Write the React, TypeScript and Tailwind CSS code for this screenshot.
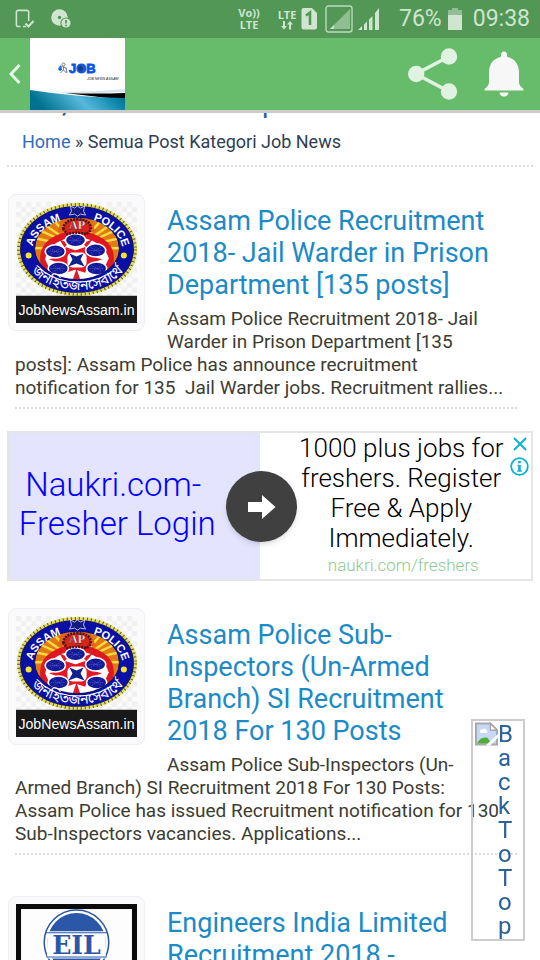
import React from "react";

function StatusBar() {
  return (
    <div className="flex h-[38px] items-center bg-[#529755] pr-[10px] pl-[15px] text-[#cfe5d0]">
      <svg width="20" height="20" viewBox="0 0 20 20" fill="none" stroke="currentColor" strokeWidth="1.6" aria-label="Device connected">
        <path d="M5.5 17.5H3a1.6 1.6 0 0 1-1.600-1.600V3A1.600 1.600 0 0 1 3 1.400h9A1.600 1.600 0 0 1 13.700 3v9M8 17.500h3" />
        <path d="M10.500 14.500l3 3 5-5.500" strokeWidth="2" />
      </svg>
      <svg className="ml-4" width="20" height="20" viewBox="0 0 20 20" aria-label="Disc warning">
        <circle cx="8.500" cy="8.500" r="8.300" fill="currentColor" />
        <circle cx="8.500" cy="8.500" r="1.700" fill="#529755" />
        <circle cx="15" cy="14" r="5.600" fill="#529755" />
        <circle cx="15" cy="14" r="4.600" fill="currentColor" />
        <path d="M15 11v3.500M15 15.700v1.500" stroke="#529755" strokeWidth="1.700" />
      </svg>
      <div className="ml-auto flex items-center">
        <div className="-ml-1 mr-[2px] w-[22px] text-center font-['Open_Sans',sans-serif] text-[11px] leading-[12px] font-bold">
          Vo))
          <br />
          LTE
        </div>
        <div className="ml-[15px] flex w-5 flex-col items-center font-['Open_Sans',sans-serif] text-[11px] leading-[12px] font-bold">
          LTE
          <svg width="12" height="9" viewBox="0 0 12 9" fill="currentColor" aria-hidden="true">
            <path d="M2 0h2v5h2L3 8.500 0 5h2zM8 8.500h2v-5h2L9 0 6 3.500h2z" />
          </svg>
        </div>
        <svg className="ml-1" width="17" height="22" viewBox="0 0 17 22" aria-label="SIM 1">
          <path d="M2.500 0H11l5 5v14.500A2 2 0 0 1 14 21.500H2.500a2 2 0 0 1-2-2V2a2 2 0 0 1 2-2z" fill="currentColor" />
          <path d="M5 7.500L9 4.500v12.500" fill="none" stroke="#529755" strokeWidth="2.600" />
        </svg>
        <svg className="ml-[7px]" width="28" height="28" viewBox="0 0 28 28" aria-label="SIM 2 signal">
          <rect x="1" y="1" width="26" height="26" rx="2.500" fill="none" stroke="currentColor" strokeWidth="1.400" opacity=".85" />
          <path d="M5 24L25 4v20z" fill="currentColor" opacity=".5" />
          <path d="M5 24l4-4v4z" fill="currentColor" />
        </svg>
        <svg className="ml-[5px]" width="22" height="22" viewBox="0 0 22 22" fill="currentColor" aria-label="Signal strength">
          <path d="M0 22l4-4v4zM6 16.500l3-3V22H6zM11 11.500l3.500-3.500v14H11zM17 5l4-5v22h-4z" />
        </svg>
        <span className="ml-[19px] text-[23px] leading-7">76%</span>
        <svg className="ml-[6px]" width="14" height="22" viewBox="0 0 14 22" aria-label="Battery">
          <path d="M0 2h4V0h6v2h4v6H0z" fill="currentColor" opacity=".5" />
          <path d="M0 7h14v15H0z" fill="currentColor" />
        </svg>
        <span className="ml-[11px] text-[23px] leading-7">09:38</span>
      </div>
    </div>
  );
}

function SiteLogo() {
  return (
    <svg width="95" height="72" viewBox="0 0 95 72" role="img" aria-label="Job News Assam">
      <defs>
        <linearGradient id="wave" x1="0" x2="1" y1="0.2" y2="0">
          <stop offset="0" stopColor="#00728f" />
          <stop offset=".45" stopColor="#58b8dc" />
          <stop offset=".8" stopColor="#0b86aa" />
          <stop offset="1" stopColor="#006480" />
        </linearGradient>
      </defs>
      <rect width="95" height="72" fill="#fff" />
      <path d="M0 52Q45 56 95 51v3Q60 56 40 55z" fill="#d5e6ee" />
      <path d="M35 55q30 1 60 0v7z" fill="#000" />
      <path d="M0 52Q45 59 95 60v12H0z" fill="url(#wave)" />
      <path d="M31 27q-5 4-1 6l2-1z" fill="#0b62d6" />
      <g fill="none" stroke="#6c7f92" strokeWidth="1">
        <circle cx="33.500" cy="26.500" r="1.500" />
        <path d="M29 30l4-1.500 4 2M33.500 29v3l-3 3M33.500 32l3 3M36 30l1 5" />
      </g>
      <text x="39" y="35" fontFamily="Liberation Sans" fontWeight="700" fontSize="13" fill="#0757df" stroke="#0757df" strokeWidth=".8">JOB</text>
      <circle cx="51" cy="30.500" r="2.800" fill="#123e87" />
      <text x="57" y="42" fontFamily="Liberation Sans" fontStyle="italic" fontSize="3.500" fill="#222">JOB NEWS ASSAM</text>
    </svg>
  );
}

function Toolbar() {
  return (
    <div className="flex h-[72px] items-center bg-[#66bc6b]">
      <button type="button" aria-label="Back" className="flex h-full w-[30px] items-center justify-center">
        <svg width="12" height="20" viewBox="0 0 12 20" fill="none" stroke="#e6f5e7" strokeWidth="3">
          <path d="M10.500 1L2 10l8.500 9" />
        </svg>
      </button>
      <SiteLogo />
      <button type="button" aria-label="Share" className="ml-auto">
        <svg width="50" height="52" viewBox="0 0 50 52" fill="#e0f2e1">
          <path d="M41 8.500L8 26l33 17.500" fill="none" stroke="#e0f2e1" strokeWidth="3.600" />
          <circle cx="41" cy="8.500" r="8.200" />
          <circle cx="8.200" cy="26" r="8.200" />
          <circle cx="41" cy="43.500" r="8.200" />
        </svg>
      </button>
      <button type="button" aria-label="Notifications" className="mr-4 ml-[26px]">
        <svg width="40" height="46" viewBox="0 0 40 46" fill="#f7f7f7">
          <path d="M17 4a3 3.500 0 0 1 6 0v1.800C31 8 35 13.500 35 21v10c0 3 1.500 4.500 4.500 7v1.500H.5V38C3.500 35.500 5 34 5 31V21C5 13.500 9 8 17 5.800z" />
          <path d="M15.500 41.500h9a4.500 4 0 0 1-9 0z" />
        </svg>
      </button>
    </div>
  );
}

function PoliceEmblem() {
  const wheels = [
    [59, 38],
    [39, 49],
    [79, 48],
    [42, 66],
    [80, 66],
  ];
  return (
    <svg width="121" height="121" viewBox="0 0 120 120" role="img" aria-label="Assam Police emblem, JobNewsAssam.in">
      <defs>
        <pattern id="check" width="10" height="10" patternUnits="userSpaceOnUse">
          <rect width="10" height="10" fill="#fbfbfb" />
          <path d="M0 0h5v5H0zM5 5h5v5H5z" fill="#f0f0f0" />
        </pattern>
        <clipPath id="field">
          <ellipse cx="60.500" cy="46" rx="42" ry="31" />
        </clipPath>
        <path id="topArc" d="M16 50A45 34 0 0 1 106 50" />
        <path id="bottomArc" d="M9 56A53 39 0 0 0 113 56" />
      </defs>
      <rect width="120" height="120" fill="url(#check)" />
      <ellipse cx="60.500" cy="47" rx="58" ry="44.500" fill="#1b1b52" stroke="#e4df62" strokeWidth="3" />
      <ellipse cx="60.500" cy="47" rx="58" ry="44.500" fill="none" stroke="#5b5a2c" strokeWidth="3" strokeDasharray="1 3" />
      <ellipse cx="60.500" cy="47" rx="55.500" ry="42.500" fill="#0a0fa5" />
      <g clipPath="url(#field)">
        <rect x="15" y="12" width="92" height="70" fill="#e07a14" />
        <path
          d="M61 45L10 10M61 45L10 22M61 45L10 34M61 45L10 46M61 45L26 5M61 45L42 5M61 45L80 5M61 45L96 5M61 45L112 10M61 45L112 22M61 45L112 34M61 45L112 46"
          stroke="#ffdc3c"
          strokeWidth="2.400"
        />
        <path d="M47 12h26l6 18H41z" fill="#e2641a" />
        <path d="M24 80V54q1-17 24-24h24q24 7 25 24v26z" fill="#de1720" />
        <path d="M29 57q2-18 30-23 28 4 33 22l-8 17-24 6-24-6z" fill="#fff" />
        <path d="M50 46l9 3 9-3 3 8 11 3-11 4-3 8-9-3-9 3-3-8-11-4 11-3z" fill="#e51825" stroke="#e51825" strokeWidth="2" />
        <path d="M60 66l4 12h-8zM48 45l-5-8 9 4zM70 45l6-8-10 4z" fill="#e51825" />
        {wheels.map(([x, y]) => (
          <g key={`${x}-${y}`}>
            <ellipse cx={x} cy={y} rx="10" ry="6.500" fill="#141a98" stroke="#fff" strokeWidth="1.500" />
            <path d={`M${x - 7} ${y}h14M${x - 5} ${y - 3}l10 6M${x + 5} ${y - 3}l-10 6`} stroke="#6a70d8" strokeWidth=".7" strokeDasharray="1 1" />
          </g>
        ))}
        <rect x="51" y="50" width="19" height="15" rx="5" fill="#fff" />
        <path d="M53 51l7 3 7-3-3 6 4 7-8-3-8 3 4-7z" fill="#10208c" />
      </g>
      <ellipse cx="60.500" cy="46" rx="42" ry="31" fill="none" stroke="#0a0f74" strokeWidth="1" />
      <path d="M47 27q0-9 13-10 15 0 14 11l-4 4q-9-3-19 0z" fill="#d9231f" stroke="#4c1017" strokeWidth="2.500" strokeDasharray="2 1" />
      <text x="60.500" y="27" textAnchor="middle" fontFamily="Liberation Serif" fontWeight="700" fontSize="12" fill="#fff" stroke="#41101a" strokeWidth=".3">AP</text>
      <path d="M54 4l4 2 3-2 3 2 4-2-1 5 2 4-5-1-3 2-3-2-5 1 2-4z" fill="#151a80" stroke="#dcdcf2" strokeWidth=".8" />
      <g fill="#fff" fontFamily="Liberation Sans" fontWeight="700" fontSize="11">
        <text>
          <textPath href="#topArc" startOffset="6">ASSAM</textPath>
        </text>
        <text>
          <textPath href="#topArc" startOffset="78">POLICE</textPath>
        </text>
        <text fontFamily="Noto Sans Bengali, Noto Sans, sans-serif" fontWeight="400" fontSize="14">
          <textPath href="#bottomArc" startOffset="50%" textAnchor="middle">জনহিতজনসেবার্থে</textPath>
        </text>
      </g>
      <circle cx="12.500" cy="53" r="3" fill="#f5e52d" />
      <circle cx="107" cy="53" r="3" fill="#f5e52d" />
      <rect y="93" width="120" height="27" fill="#191919" />
      <text x="60" y="112" textAnchor="middle" fontFamily="Liberation Sans" fontSize="14" fill="#fff">JobNewsAssam.in</text>
    </svg>
  );
}

function EngineersLogo() {
  return (
    <svg width="121" height="121" viewBox="0 0 120 120" role="img" aria-label="Engineers India Limited">
      <rect width="120" height="120" fill="#0b0b0b" />
      <rect x="5" y="5" width="110" height="110" fill="#fdfdfd" />
      <circle cx="60" cy="38" r="32" fill="#fff" stroke="#2c56a0" strokeWidth="1.500" />
      <circle cx="60" cy="38" r="29" fill="#2a57a8" />
      <path d="M31 27h58v27H31z" fill="#fff" />
      <path d="M30 28.500h60M30 52.500h60" stroke="#2c56a0" strokeWidth="1" />
      <text x="60" y="50" textAnchor="middle" fontFamily="DejaVu Serif" fontWeight="700" fontSize="25" fill="#2a57a8">EIL</text>
    </svg>
  );
}

interface PostProps {
  title: string;
  excerpt: string;
  thumbnail: React.ReactNode;
}

function Post({ title, excerpt, thumbnail }: PostProps) {
  return (
    <article className="mr-[23px] ml-[15px] border-b-2 border-dotted border-[#dddddd] pb-2">
      <div className="float-left mr-[22px] mb-[15px] -ml-[7px] rounded-lg border border-[#efeff2] bg-[#fafafc] p-[7px]">
        {thumbnail}
      </div>
      <h2 className="pt-[11px] text-[27px] leading-8 whitespace-pre-line text-[#1b8ac7]">
        <a href="#post">{title}</a>
      </h2>
      <p className="mt-[6px] text-[19px] leading-[23px] whitespace-pre-wrap text-[#3c3c32]">{excerpt}</p>
    </article>
  );
}

function AdBanner() {
  return (
    <aside className="relative mx-[7px] mt-[22px] mb-[27px] flex h-[150px] border-2 border-[#e5e5e5] bg-white font-light">
      <a href="#ad" className="flex w-[48%] items-center bg-[#e4e4ff] pr-8 pb-1 text-center text-[33px] leading-[39px] text-[#0000ff]">
        <span className="w-full pr-[2px]">
          Naukri.com-&nbsp;
          <br />
          Fresher Login
        </span>
      </a>
      <div className="flex-1 pr-6 pl-9 text-center">
        <p className="text-[26px] leading-[30px] text-black">1000 plus jobs for freshers. Register Free &amp; Apply Immediately.</p>
        <a href="#ad" className="block pl-1 text-[17px] leading-6 text-[#8ccb8e]">naukri.com/freshers</a>
      </div>
      <button type="button" aria-label="Open ad" className="absolute top-[38px] left-[217px] flex size-[71px] items-center justify-center rounded-full bg-[#404040] shadow-md">
        <svg width="28" height="24" viewBox="0 0 28 24" fill="#fff">
          <path d="M0 7h14V0l13.500 12L14 24v-7H0z" />
        </svg>
      </button>
      <div className="absolute top-[4px] right-[2px] flex flex-col items-center gap-[6px] text-[#09b4d2]">
        <button type="button" aria-label="Close ad">
          <svg width="14" height="14" viewBox="0 0 14 14" stroke="currentColor" strokeWidth="2">
            <path d="M1 1l12 12M13 1L1 13" />
          </svg>
        </button>
        <button type="button" aria-label="About this ad">
          <svg width="19" height="19" viewBox="0 0 19 19" fill="none" stroke="currentColor" strokeWidth="1.800">
            <circle cx="9.500" cy="9.500" r="8.300" />
            <path d="M9.500 4v2.200M9.500 8v6" strokeWidth="2.600" />
            <path d="M7.500 8.300h2M7 14.200h5" strokeWidth="1.200" />
          </svg>
        </button>
      </div>
    </aside>
  );
}

function BackToTop() {
  return (
    <button type="button" aria-label="Back To Top" className="fixed right-[15px] bottom-[19px] flex w-[54px] items-start border-2 border-[#cccccc] px-[2px] py-px text-left text-[#2c6199]">
      <svg width="23" height="24" viewBox="0 0 24 24" className="shrink-0" aria-hidden="true">
        <path d="M1 1h15l7 7v15H1z" fill="#c6d8f5" stroke="#a8a8a8" strokeWidth="2" />
        <path d="M16 1v7h7z" fill="#fff" stroke="#a8a8a8" strokeWidth="1.500" />
        <path d="M5 10q0-3 3-3 2-2 4 1 2 1 0 3H6z" fill="#fff" />
        <path d="M2 22q4-8 11-6l4 6z" fill="#4fae36" />
        <path d="M11 24L24 12v4l-8 8z" fill="#fff" />
      </svg>
      <span className="flex flex-col text-2xl leading-6">
        {"BackToTop".split("").map((letter, i) => (
          <span key={i}>{letter}</span>
        ))}
      </span>
    </button>
  );
}

export default function App() {
  return (
    <div className="flex h-screen flex-col overflow-hidden bg-white font-[Roboto,sans-serif]">
      <header className="shrink-0 border-b-[3px] border-[#cccccc]">
        <StatusBar />
        <Toolbar />
      </header>
      <main className="min-h-0 flex-1 overflow-hidden">
        <div className="flex h-[6px] items-end overflow-hidden pl-[62px] text-[28px] leading-[33px] text-[#2c5c94]">
          <span className="w-[200px]">,</span>
          <span>p</span>
        </div>
        <nav aria-label="Breadcrumb" className="mx-[7px] border-b-2 border-dotted border-[#dddddd] px-[15px] pt-[11px] pb-[11px] text-lg leading-6 text-[#2f3e52]">
          <a href="#home" className="text-[#2f6dbb]">Home</a> » Semua Post Kategori Job News
        </nav>
        <div className="pt-[27px]">
          <Post
            title="Assam Police Recruitment 2018- Jail Warder in Prison Department [135 posts]"
            excerpt={
              "Assam Police Recruitment 2018- Jail\nWarder in Prison Department [135\nposts]: Assam Police has announce recruitment\nnotification for 135  Jail Warder jobs. Recruitment rallies..."
            }
            thumbnail={<PoliceEmblem />}
          />
          <AdBanner />
          <Post
            title={"Assam Police Sub-\nInspectors (Un-Armed\nBranch) SI Recruitment\n2018 For 130 Posts"}
            excerpt={
              "Assam Police Sub-Inspectors (Un-\nArmed Branch) SI Recruitment 2018 For 130 Posts:\nAssam Police has issued Recruitment notification for 130\nSub-Inspectors vacancies. Applications..."
            }
            thumbnail={<PoliceEmblem />}
          />
          <div className="pt-[41px]">
            <Post
              title="Engineers India Limited Recruitment 2018 -"
              excerpt=""
              thumbnail={<EngineersLogo />}
            />
          </div>
        </div>
      </main>
      <BackToTop />
    </div>
  );
}
